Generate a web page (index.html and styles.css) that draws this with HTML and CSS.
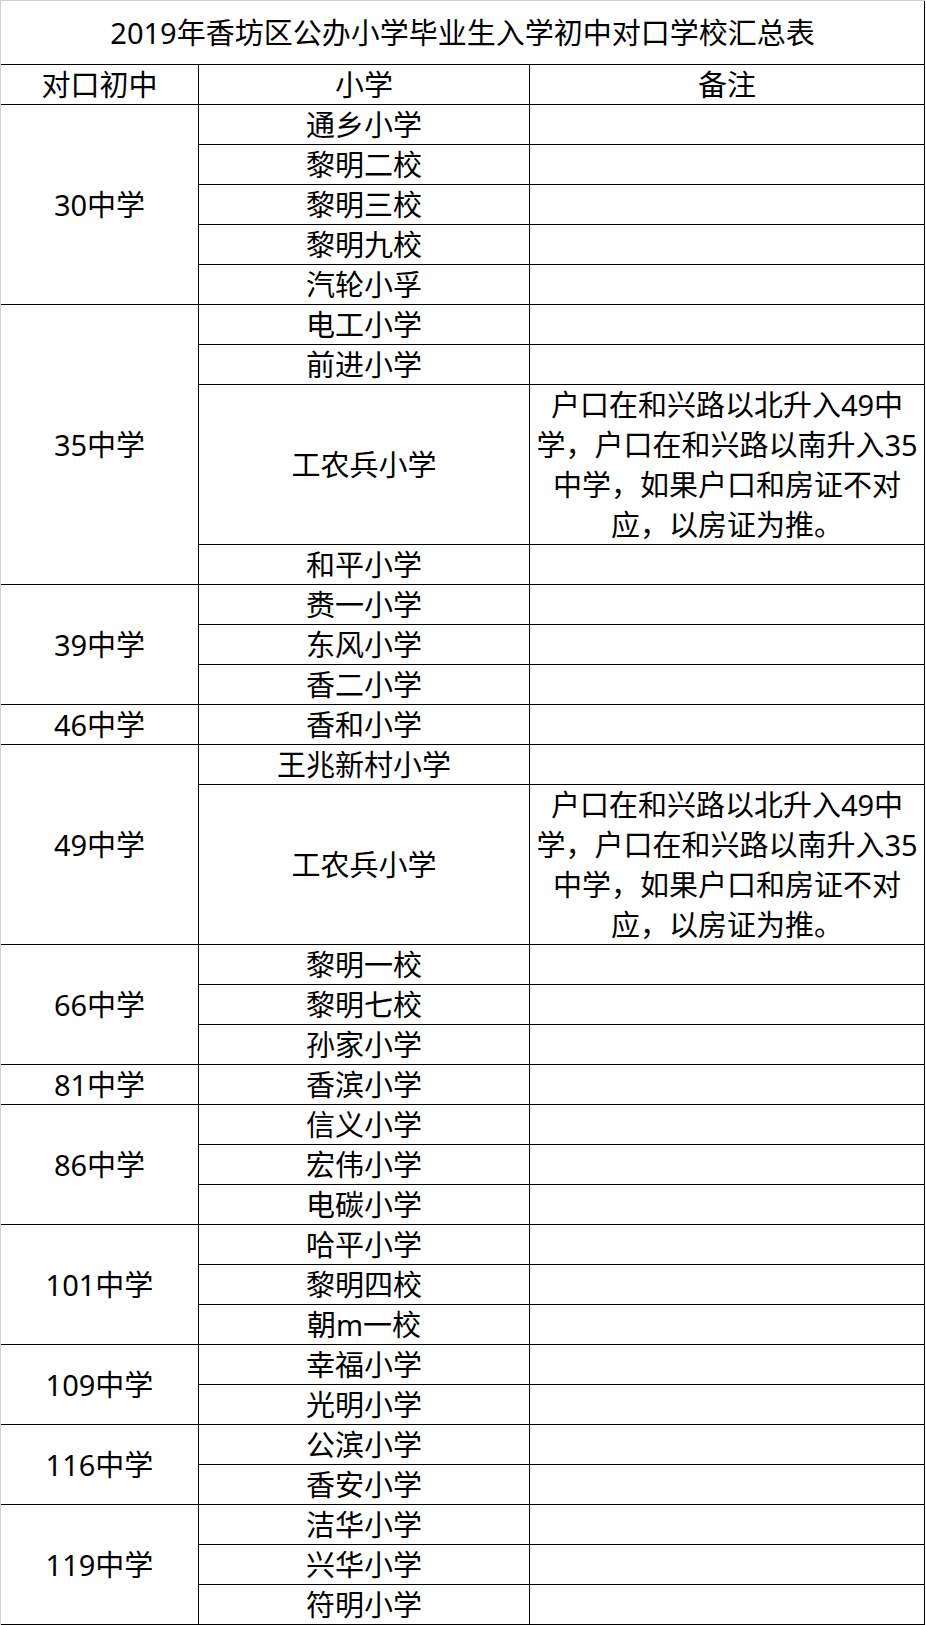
FILE: index.html
```html
<!DOCTYPE html>
<html lang="zh-CN">
<head>
<meta charset="utf-8">
<title>2019年香坊区公办小学毕业生入学初中对口学校汇总表</title>
<link rel="stylesheet" href="styles.css">
</head>
<body>
<div class="sheet">
  <div class="cell title">2019年香坊区公办小学毕业生入学初中对口学校汇总表</div>

  <div class="cell c1">对口初中</div>
  <div class="cell c2">小学</div>
  <div class="cell c3">备注</div>

  <div class="cell c1 r5">30中学</div>
  <div class="cell c2">通乡小学</div><div class="cell c3"></div>
  <div class="cell c2">黎明二校</div><div class="cell c3"></div>
  <div class="cell c2">黎明三校</div><div class="cell c3"></div>
  <div class="cell c2">黎明九校</div><div class="cell c3"></div>
  <div class="cell c2">汽轮小孚</div><div class="cell c3"></div>

  <div class="cell c1 r7">35中学</div>
  <div class="cell c2">电工小学</div><div class="cell c3"></div>
  <div class="cell c2">前进小学</div><div class="cell c3"></div>
  <div class="cell c2 r4">工农兵小学</div>
  <div class="cell c3 r4 note">户口在和兴路以北升入49中<br>学，户口在和兴路以南升入35<br>中学，如果户口和房证不对<br>应，以房证为推。</div>
  <div class="cell c2">和平小学</div><div class="cell c3"></div>

  <div class="cell c1 r3">39中学</div>
  <div class="cell c2">赉一小学</div><div class="cell c3"></div>
  <div class="cell c2">东风小学</div><div class="cell c3"></div>
  <div class="cell c2">香二小学</div><div class="cell c3"></div>

  <div class="cell c1">46中学</div>
  <div class="cell c2">香和小学</div><div class="cell c3"></div>

  <div class="cell c1 r5">49中学</div>
  <div class="cell c2">王兆新村小学</div><div class="cell c3"></div>
  <div class="cell c2 r4">工农兵小学</div>
  <div class="cell c3 r4 note">户口在和兴路以北升入49中<br>学，户口在和兴路以南升入35<br>中学，如果户口和房证不对<br>应，以房证为推。</div>

  <div class="cell c1 r3">66中学</div>
  <div class="cell c2">黎明一校</div><div class="cell c3"></div>
  <div class="cell c2">黎明七校</div><div class="cell c3"></div>
  <div class="cell c2">孙家小学</div><div class="cell c3"></div>

  <div class="cell c1">81中学</div>
  <div class="cell c2">香滨小学</div><div class="cell c3"></div>

  <div class="cell c1 r3">86中学</div>
  <div class="cell c2">信义小学</div><div class="cell c3"></div>
  <div class="cell c2">宏伟小学</div><div class="cell c3"></div>
  <div class="cell c2">电碳小学</div><div class="cell c3"></div>

  <div class="cell c1 r3">101中学</div>
  <div class="cell c2">哈平小学</div><div class="cell c3"></div>
  <div class="cell c2">黎明四校</div><div class="cell c3"></div>
  <div class="cell c2">朝m一校</div><div class="cell c3"></div>

  <div class="cell c1 r2">109中学</div>
  <div class="cell c2">幸福小学</div><div class="cell c3"></div>
  <div class="cell c2">光明小学</div><div class="cell c3"></div>

  <div class="cell c1 r2">116中学</div>
  <div class="cell c2">公滨小学</div><div class="cell c3"></div>
  <div class="cell c2">香安小学</div><div class="cell c3"></div>

  <div class="cell c1 r3">119中学</div>
  <div class="cell c2">洁华小学</div><div class="cell c3"></div>
  <div class="cell c2">兴华小学</div><div class="cell c3"></div>
  <div class="cell c2">符明小学</div><div class="cell c3"></div>
</div>
</body>
</html>
```

FILE: styles.css
```css
html, body {
  margin: 0;
  padding: 0;
  background: #ffffff;
}

.sheet {
  width: 924px;
  border-top: 1px solid #d0d0d0;
  border-left: 1px solid #d0d0d0;
  display: grid;
  grid-template-columns: 198px 331px 395px;
  grid-template-rows: 64px;
  grid-auto-rows: 40px;
  font-family: "Noto Sans", "Noto Sans CJK SC", sans-serif;
  font-size: 29px;
  color: #000000;
}

.cell {
  box-sizing: border-box;
  border-right: 1px solid #000000;
  border-bottom: 1px solid #000000;
  display: flex;
  align-items: center;
  justify-content: center;
  text-align: center;
  line-height: 40px;
  white-space: nowrap;
  overflow: hidden;
}

.title {
  grid-column: 1 / -1;
}

.c1 { grid-column: 1; }
.c2 { grid-column: 2; }
.c3 { grid-column: 3; }

.r2 { grid-row: span 2; }
.r3 { grid-row: span 3; }
.r4 { grid-row: span 4; }
.r5 { grid-row: span 5; }
.r7 { grid-row: span 7; }

.note {
  line-height: 40px;
}
```
